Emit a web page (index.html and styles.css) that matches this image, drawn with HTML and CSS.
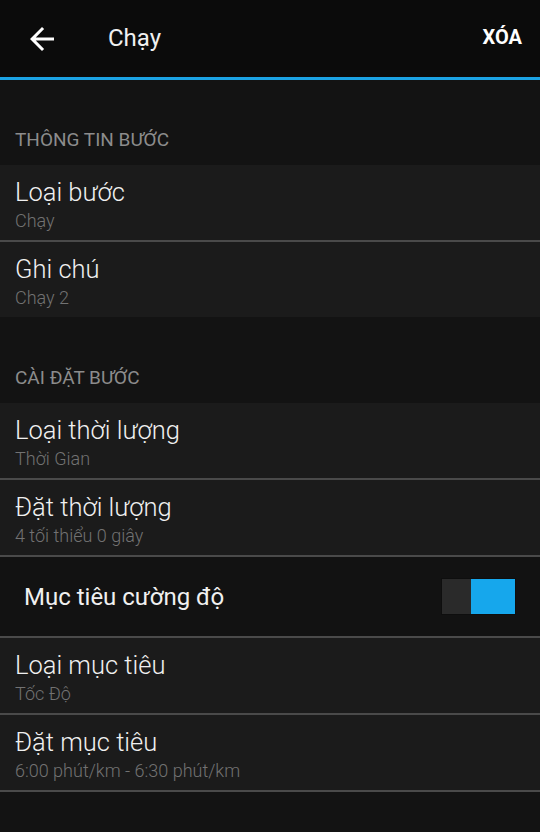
FILE: index.html
```html
<!DOCTYPE html>
<html lang="vi">

<head>
  <title>Chạy</title>
  <meta charset="utf-8" />
  <meta name="viewport" content="width=device-width, initial-scale=1" />
  <link rel="stylesheet" href="styles.css">
</head>

<body>
  <header class="appbar">
    <button class="back" aria-label="Quay lại">
      <svg viewBox="0 0 24 24" width="36" height="36">
        <path fill="#fff" d="M20 11H7.83l5.59-5.59L12 4l-8 8 8 8 1.41-1.41L7.83 13H20v-2z" />
      </svg>
    </button>
    <h1 class="title">Chạy</h1>
    <button class="action">XÓA</button>
  </header>

  <main>
    <h3 class="section">THÔNG TIN BƯỚC</h3>
    <ul class="group">
      <li class="row">
        <div class="label">Loại bước</div>
        <div class="value">Chạy</div>
      </li>
      <li class="row">
        <div class="label">Ghi chú</div>
        <div class="value">Chạy 2</div>
      </li>
    </ul>

    <h3 class="section">CÀI ĐẶT BƯỚC</h3>
    <ul class="group lined">
      <li class="row">
        <div class="label">Loại thời lượng</div>
        <div class="value">Thời Gian</div>
      </li>
      <li class="row">
        <div class="label">Đặt thời lượng</div>
        <div class="value">4 tối thiểu 0 giây</div>
      </li>
      <li class="row switch-row">
        <div class="label">Mục tiêu cường độ</div>
        <span class="switch on"><span class="knob"></span><span class="fill"></span></span>
      </li>
      <li class="row">
        <div class="label">Loại mục tiêu</div>
        <div class="value">Tốc Độ</div>
      </li>
      <li class="row">
        <div class="label">Đặt mục tiêu</div>
        <div class="value">6:00 phút/km - 6:30 phút/km</div>
      </li>
    </ul>
  </main>
</body>

</html>
```

FILE: styles.css
```css
html,
body {
  margin: 0;
  background: #131313;
  color: #f0f0f0;
  font-family: Roboto, "Noto Sans", sans-serif;
}

body {
  height: 832px;
  overflow: hidden;
}

.appbar {
  display: flex;
  align-items: center;
  height: 77px;
  background: #0b0b0b;
  border-bottom: 3px solid #1ba3e4;
}

.back {
  display: flex;
  margin-left: 24px;
  padding: 0;
  border: 0;
  background: none;
}

.title {
  flex: 1;
  margin: 0 0 2px 48px;
  font-size: 24px;
  font-weight: 400;
}

.action {
  margin: 0 18px 3px 0;
  padding: 0;
  border: 0;
  background: none;
  color: #fff;
  font-family: inherit;
  font-size: 20px;
  font-weight: 700;
}

.section {
  margin: 0;
  padding: 48px 15px 16px;
  height: 21px;
  color: #8c8c8c;
  font-size: 19px;
  font-weight: 400;
}

.group + .section {
  padding-top: 49px;
}

.group {
  margin: 0;
  padding: 0;
  list-style: none;
}

.row {
  box-sizing: border-box;
  height: 75px;
  padding: 12px 15px 0;
  background: #1b1b1b;
}

.group .row + .row {
  height: 77px;
  border-top: 2px solid #4a4a4a;
}

.group.lined {
  border-bottom: 2px solid #4a4a4a;
}

.label {
  font-size: 25.5px;
  font-weight: 300;
  line-height: 30px;
}

.value {
  margin-top: 3px;
  color: #727272;
  font-size: 18px;
  font-weight: 300;
  line-height: 22px;
}

.group .row.switch-row {
  display: flex;
  align-items: center;
  justify-content: space-between;
  height: 81px;
  padding: 0 24px;
  background: #121212;
}

.switch-row .label {
  font-size: 24px;
  font-weight: 400;
}

.switch {
  display: flex;
  width: 75px;
  height: 37px;
  box-sizing: border-box;
  border: 1px solid #0e0e0e;
}

.switch .knob {
  width: 29px;
  background: #2a2a2a;
}

.switch .fill {
  flex: 1;
  background: #16a7ec;
}
```
